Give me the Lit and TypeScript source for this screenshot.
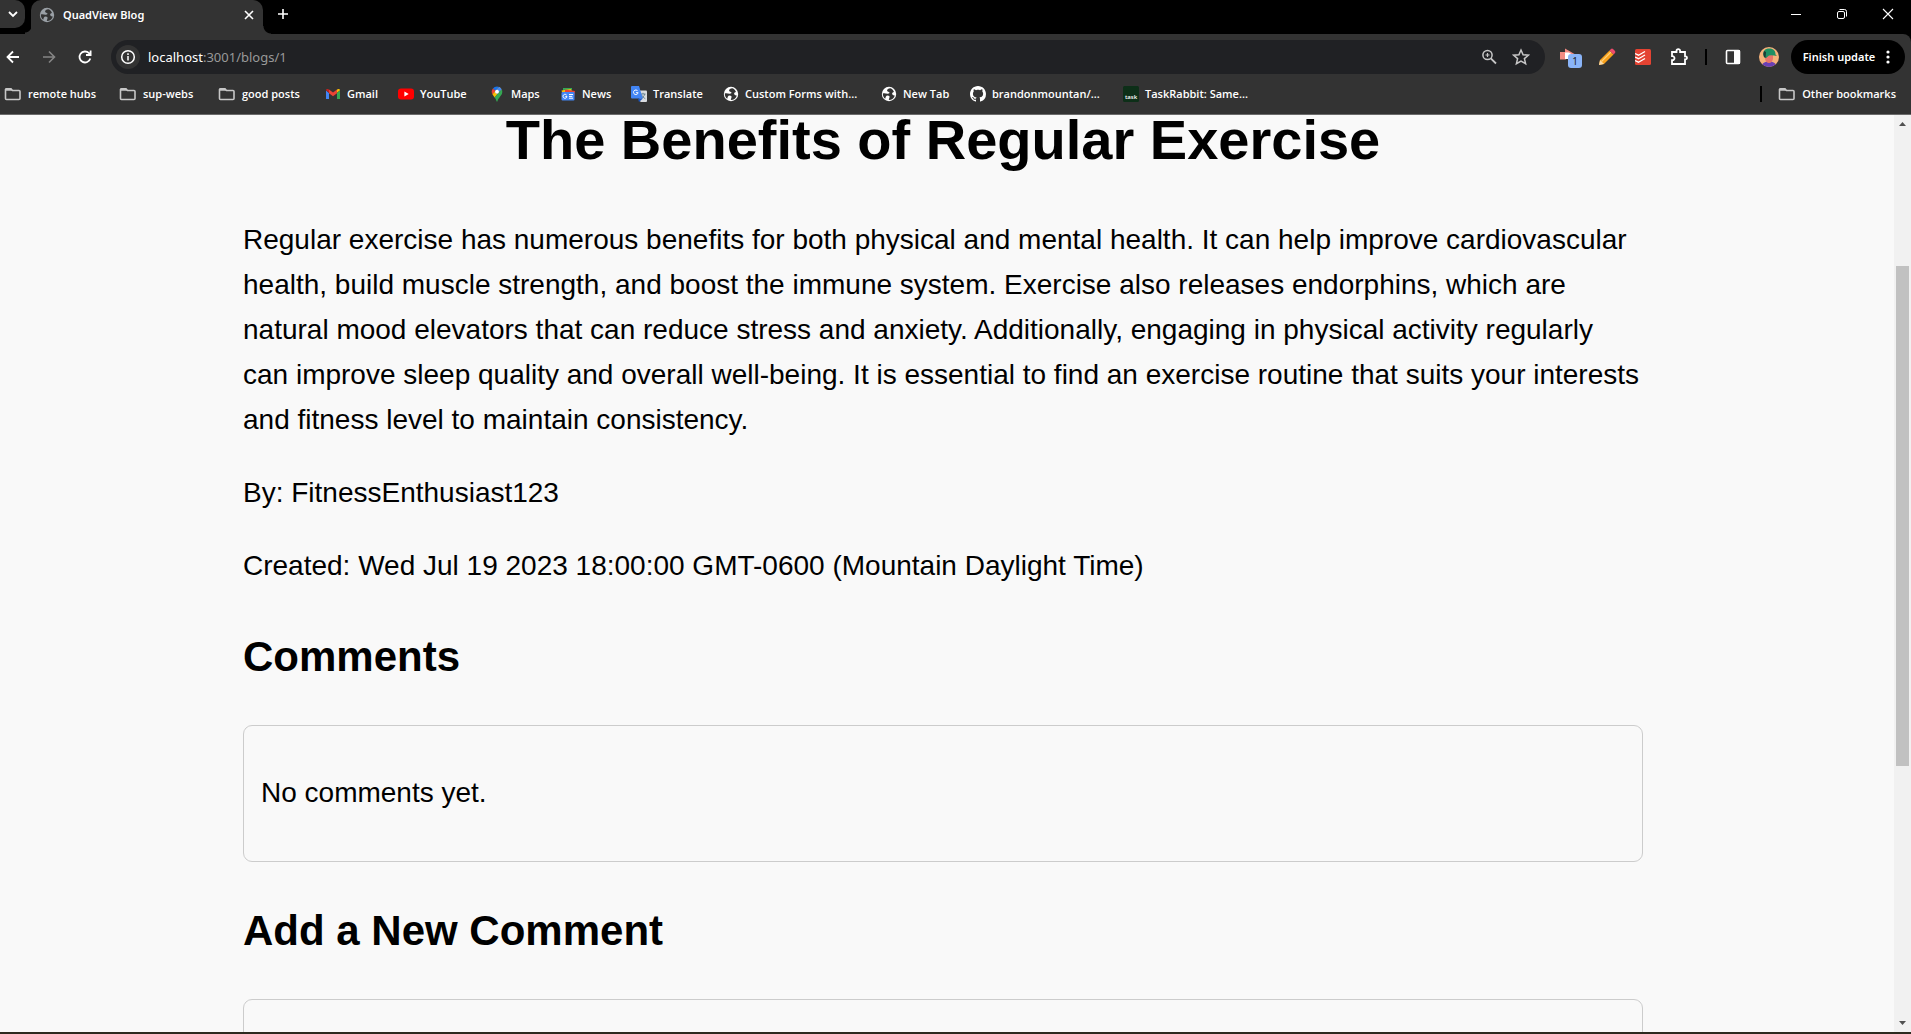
import { LitElement, html, svg, css } from "lit";
import { customElement } from "lit/decorators.js";

const globe = (fg: string, bg: string) => html`<svg class="ico" viewBox="0 0 16 16"><circle cx="8" cy="8" r="7.2" fill=${fg} /><path d="M9.5 2.2C7 2.4 5.6 3.6 6.2 5c.5 1 2 .8 2.300 1.600.3.9-.8 1.200-2 1.100C4.800 7.500 3.800 7 1.800 7.400c0 2.600 1 4.300 2.500 5.300C4.600 11 5 9.600 6.500 9.600c1.700 0 2.300.8 2 2-.2.9-.7 1.400-.6 2.500 3 0 5.400-2 5.900-4.700-1.400.2-2.300-.3-2.600-1.300-.3-1.100.5-1.900 1.800-2.100C12 3.800 11 2.700 9.500 2.200z" fill=${bg} /></svg>`;
const folder = html`<svg class="ico folder" viewBox="0 0 18 16"><path d="M1.500 3.500V12.500a1 1 0 0 0 1 1H15a1 1 0 0 0 1-1V5.500a1 1 0 0 0-1-1H8.500L7 2.800H2.500a1 1 0 0 0-1 .7z" fill="none" stroke="#c7c7c7" stroke-width="1.600" /><path d="M1.500 2.800h5.500l1.500 2h-7z" fill="#c7c7c7" /></svg>`;
const gmail = html`<svg class="ico" viewBox="0 0 16 16"><path d="M1 4.500V13h3V7z" fill="#4285f4" /><path d="M15 4.500V13h-3V7z" fill="#34a853" /><path d="M1 4.300 4 6.800V3.500C3 2.500 1 2.800 1 4.300z" fill="#c5221f" /><path d="M15 4.300 12 6.800V3.500c1-1 3-.7 3 .8z" fill="#fbbc04" /><path d="M4 3.500 8 6.600l4-3.100v3.700L8 10.300 4 7.200z" fill="#ea4335" /></svg>`;
const youtube = html`<svg class="ico" viewBox="0 0 16 16"><rect y="2.500" width="16" height="11" rx="3" fill="#f00" /><path d="M6.400 5.500v5L10.700 8z" fill="#fff" /></svg>`;
const maps = html`<svg class="ico" viewBox="0 0 16 16"><path d="M8 .5A5.300 5.300 0 0 0 3.900 2.500L7 5.200 10.300 1z" fill="#1a73e8" /><path d="M3.900 2.500A5.300 5.300 0 0 0 3.400 8.300L7 5.200z" fill="#ea4335" /><path d="M3.400 8.300c.6 1.100 1.400 2 2.200 3.100L12.500 3.200a6 6 0 0 0-2.200-2.200z" fill="#fbbc04" /><path d="M10.300 1 6 6.100 8 8l4.700-4.600A5.300 5.300 0 0 0 10.300 1z" fill="#4285f4" /><path d="M5.500 11.200c1 1.300 1.700 2.400 2 4 .1.500.9.500 1 0 .7-3.700 4.800-5.300 4.800-9.400 0-.9-.2-1.700-.6-2.400z" fill="#34a853" /><circle cx="8" cy="5.700" r="1.900" fill="#fff" /></svg>`;
const news = html`<svg class="ico" viewBox="0 0 16 16"><path d="M3 2l9 0v6H3z" fill="#34a853" /><path d="M1.500 4.500 11 3l1 5-9 2z" fill="#fbbc04" /><path d="M5 3.500l10 1.500-1 6-9-2z" fill="#ea4335" /><rect x="1.500" y="6" width="13" height="8.500" rx="1" fill="#4285f4" /><path d="M6.700 9.200A2 2 0 1 0 7 10.600H5.300M9 8.500h4M9 10.400h3.300M9 12.200h4" fill="none" stroke="#fff" stroke-width="1" /></svg>`;
const translate = html`<svg class="ico" viewBox="0 0 16 16"><path d="M6 4.500h9a1 1 0 0 1 1 1V15a1 1 0 0 1-1 1H9.500z" fill="#dadce0" /><path d="M9.500 8h5M12 6.800V8m1.800 0c-.5 2-2 3.700-4 4.600M10.500 8.500c.7 1.800 2 3.200 3.800 4.200" fill="none" stroke="#607d8b" stroke-width=".9" /><path d="M1 0h7l3.800 12.500H1a1 1 0 0 1-1-1V1a1 1 0 0 1 1-1z" fill="#4285f4" /><path d="m8 16 3.800-3.500H7z" fill="#1a56c4" /><path d="M6.800 5.100A2.300 2.300 0 1 0 7.100 6.700H4.900" fill="none" stroke="#fff" stroke-width="1" /></svg>`;
const github = html`<svg class="ico" viewBox="0 0 16 16"><path fill="#fff" d="M8 0C3.580 0 0 3.580 0 8c0 3.540 2.290 6.530 5.470 7.590.4.070.55-.17.55-.38 0-.19-.01-.82-.01-1.490-2.010.37-2.530-.49-2.690-.94-.09-.23-.48-.94-.82-1.130-.28-.15-.68-.52-.01-.53.63-.01 1.080.58 1.230.82.72 1.210 1.870.87 2.330.66.070-.52.28-.87.51-1.070-1.780-.2-3.640-.89-3.640-3.950 0-.87.31-1.590.82-2.150-.08-.2-.36-1.020.08-2.120 0 0 .67-.21 2.200.82.64-.18 1.320-.27 2-.27s1.360.09 2 .27c1.530-1.040 2.200-.82 2.200-.82.44 1.100.16 1.920.08 2.120.51.56.82 1.270.82 2.150 0 3.070-1.870 3.750-3.650 3.950.29.25.54.73.54 1.480 0 1.070-.01 1.930-.01 2.200 0 .21.15.46.55.38A8.010 8.010 0 0 0 16 8c0-4.420-3.580-8-8-8z" /></svg>`;
const task = html`<svg class="ico" viewBox="0 0 16 16"><rect width="16" height="16" rx="1.500" fill="#0d2f18" /><text x="8" y="13" text-anchor="middle" font-size="6" font-family="Open Sans, sans-serif" fill="#fff">task</text></svg>`;

const bookmarks = [
  { label: "remote hubs", icon: folder, w: 115 },
  { label: "sup-webs", icon: folder, w: 99 },
  { label: "good posts", icon: folder, w: 107 },
  { label: "Gmail", icon: gmail, w: 73 },
  { label: "YouTube", icon: youtube, w: 91 },
  { label: "Maps", icon: maps, w: 71 },
  { label: "News", icon: news, w: 71 },
  { label: "Translate", icon: translate, w: 92 },
  { label: "Custom Forms with...", icon: globe("#fff", "#333"), w: 158 },
  { label: "New Tab", icon: globe("#fff", "#333"), w: 89 },
  { label: "brandonmountan/...", icon: github, w: 153 },
  { label: "TaskRabbit: Same...", icon: task, w: 140 },
];

const line = (d: string, color = "#fff", w = 1.8) => svg`<path d=${d} fill="none" stroke=${color} stroke-width=${w} />`;

@customElement("browser-chrome")
class BrowserChrome extends LitElement {
  static styles = css`
    :host { display: block; font: 600 11px/16px "Noto Sans", "Open Sans", sans-serif; color: #fff; background: #000; border-bottom: 1px solid #6b6b6b; }
    button { all: unset; box-sizing: border-box; display: flex; align-items: center; justify-content: center; flex: none; }
    svg { display: block; flex: none; }
    a { color: inherit; text-decoration: none; }
    .ico { width: 16px; height: 16px; }
    .folder { width: 18px; }
    .tabs { display: flex; height: 34px; background: #000; }
    .search { width: 25px; height: 28px; background: #333; border-radius: 0 10px 10px 0; }
    .corner { width: 6px; align-self: flex-end; height: 8px; background: radial-gradient(circle at 0 0, #000 6px, #333 7px); }
    .corner.right { width: 8px; background: radial-gradient(circle at 100% 0, #000 7px, #333 8px); }
    .tab { display: flex; align-items: center; width: 232px; box-sizing: border-box; padding: 0 8px 5px; background: #333; border-radius: 10px 10px 0 0; gap: 8px; }
    .tab .title { flex: 1; }
    .plus { width: 24px; height: 28px; }
    .controls { display: flex; margin-left: auto; height: 28px; }
    .controls button { width: 46px; }
    .bar { display: flex; align-items: center; height: 46px; background: #333; border-radius: 0 8px 0 0; }
    .nav { display: flex; width: 111px; }
    .nav button { width: 26px; margin-right: 10px; }
    .omni { flex: 1; display: flex; align-items: center; height: 34px; border-radius: 17px; background: #202124; padding: 0 8px 0 5px; box-sizing: border-box; }
    .info { width: 24px; height: 24px; border-radius: 12px; background: #333; }
    .url { flex: 1; margin-left: 8px; font-size: 13px; font-weight: 400; color: #999; }
    .url b { color: #fff; font-weight: 400; }
    .omni .act { width: 32px; }
    .ext { display: flex; align-items: center; margin-left: 8px; }
    .ext button { width: 36px; height: 34px; }
    .sep { width: 2px; height: 16px; background: #000; }
    .ext .sep { margin: 0 8px; }
    .ext .update { width: 114px; margin: 0 6px 0 4px; border-radius: 17px; background: #000; gap: 8px; }
    .marks { box-sizing: border-box; display: flex; align-items: center; height: 34px; padding: 0 15px 6px 4px; font-family: "Open Sans", "Noto Sans", sans-serif; background: #333; }
    .mark { display: flex; align-items: center; gap: 6px; white-space: nowrap; }
    .other { margin-left: auto; display: flex; align-items: center; gap: 16px; }
  `;
  render() {
    return html`
      <div class="tabs">
        <button class="search" aria-label="Search tabs"><svg width="12" height="12" viewBox="0 0 12 12">${line("M2 4l4 4 4-4")}</svg></button>
        <span class="corner"></span>
        <div class="tab">
          ${globe("#9aa0a6", "#333")}
          <span class="title">QuadView Blog</span>
          <button aria-label="Close tab"><svg width="12" height="12" viewBox="0 0 12 12">${line("M2 2l8 8M10 2l-8 8", "#fff", 1.600)}</svg></button>
        </div>
        <span class="corner right"></span>
        <button class="plus" aria-label="New tab"><svg width="12" height="12" viewBox="0 0 12 12">${line("M6 1v10M1 6h10", "#fff", 1.600)}</svg></button>
        <div class="controls">
          <button aria-label="Minimize"><svg width="12" height="12" viewBox="0 0 12 12">${line("M1 6.500h10", "#fff", 1)}</svg></button>
          <button aria-label="Restore"><svg width="12" height="12" viewBox="0 0 12 12"><rect x="1.500" y="3.500" width="7" height="7" rx="1.500" fill="none" stroke="#fff" />${line("M3.500 1.500H8.500a2 2 0 0 1 2 2V8.500", "#fff", 1)}</svg></button>
          <button aria-label="Close"><svg width="12" height="12" viewBox="0 0 12 12">${line("M1 1l10 10M11 1L1 11", "#fff", 1.100)}</svg></button>
        </div>
      </div>
      <div class="bar">
        <div class="nav">
          <button aria-label="Back"><svg width="16" height="16" viewBox="0 0 16 16">${line("M14 8H3M8 2.500 2.500 8 8 13.500")}</svg></button>
          <button aria-label="Forward"><svg width="16" height="16" viewBox="0 0 16 16">${line("M2 8h11M8 2.500 13.500 8 8 13.500", "#858585", 1.600)}</svg></button>
          <button aria-label="Reload"><svg width="16" height="16" viewBox="0 0 16 16">${line("M13.300 9.500A5.500 5.500 0 1 1 12 4.200L13.800 6M13.600 1.500V6H9")}</svg></button>
        </div>
        <div class="omni">
          <button class="info" aria-label="Site information"><svg width="16" height="16" viewBox="0 0 16 16"><circle cx="8" cy="8" r="6.300" fill="none" stroke="#fff" stroke-width="1.500" />${line("M8 7v4.500M8 4.300v1.600", "#fff", 1.500)}</svg></button>
          <span class="url"><b>localhost</b>:3001/blogs/1</span>
          <button class="act" aria-label="Zoom"><svg width="16" height="16" viewBox="0 0 16 16"><circle cx="6.500" cy="6" r="4.600" fill="none" stroke="#c7c7c7" stroke-width="1.500" />${line("M9.800 9.300 15 14.500", "#c7c7c7", 1.800)}${line("M6.500 4v4M4.500 6h4", "#c7c7c7", 1.200)}</svg></button>
          <button class="act" aria-label="Bookmark this page"><svg width="18" height="18" viewBox="0 0 18 18">${line("M9 2l2.100 4.700 5.200.5-3.900 3.400 1.200 5.100L9 13l-4.600 2.700 1.200-5.100L1.700 7.200l5.200-.5z", "#c7c7c7", 1.500)}</svg></button>
        </div>
        <div class="ext">
          <button aria-label="Recorder extension"><svg width="24" height="26" viewBox="0 0 24 26"><path d="M1 8h5V4.500L15.500 10l-9 5.500H1z" fill="#f28b82" /><path d="M6 8.500h4l3 2-4 4.500H6z" fill="#fff" /><rect x="9" y="10" width="14" height="14" rx="3" fill="#8ab4f8" /><text x="16" y="21" text-anchor="middle" font-size="10" fill="#202124" font-weight="400">1</text></svg></button>
          <button aria-label="Pencil extension"><svg width="18" height="18" viewBox="0 0 18 18"><path d="M1 17l1-5L11.500 2.500 15.500 6.500 6 16z" fill="#f9a01b" /><path d="M3.500 13.500 13 4" stroke="#ffd27a" stroke-width="1.200" /><path d="M1 17l1-5L6 16z" fill="#f7d9a8" /><path d="M11.500 2.500 13 1q1-.8 2 0l2 2q.8 1 0 2L15.500 6.500z" fill="#ef4a6b" /></svg></button>
          <button aria-label="Todoist"><svg width="16" height="16" viewBox="0 0 16 16"><rect width="16" height="16" rx="1.500" fill="#e44332" />${line("M0 4.500l3.500 1.700L10 2.500M0 8 3.500 9.700 10 6M0 11.500l3.500 1.700L10 9.500", "#fff", 1.300)}</svg></button>
          <button aria-label="Extensions"><svg width="18" height="18" viewBox="0 0 18 18">${line("M2 4h4.500V3a1.800 1.800 0 0 1 3.600 0v1H15v4.300h.5a1.500 1.500 0 0 1 0 3H15V16H2v-3.800h.5a2 2 0 0 0 0-4H2z")}</svg></button>
          <span class="sep"></span>
          <button aria-label="Side panel"><svg width="16" height="16" viewBox="0 0 16 16"><rect x="1.500" y="1.500" width="13" height="13" rx="1" fill="none" stroke="#fff" stroke-width="1.600" /><path d="M9 1h6v14H9z" fill="#fff" /></svg></button>
          <button aria-label="Profile"><svg width="20" height="20" viewBox="0 0 20 20"><defs><clipPath id="av"><circle cx="10" cy="10" r="10" /></clipPath></defs><g clip-path="url(#av)"><rect width="20" height="20" fill="#f6b27a" /><path d="M2 20c1-4 4-5.500 8-5.500s7 1.500 8 5.500z" fill="#6a3fb5" /><path d="M6 7h8v5q-1 4-4 4t-4-4z" fill="#e8756a" /><path d="M5 10C3 4 6 1.500 10.500 1.500c4 0 6 2.500 6 6L18 9q-5-1-8-.5L7 11z" fill="#1f8f63" /><path d="M5 10q-1.500-3 0-6l2 1-.5 6z" fill="#1c3b35" /></g></svg></button>
          <button class="update">Finish update<svg width="10" height="14" viewBox="0 0 10 14" fill="#fff"><circle cx="5" cy="2" r="1.600" /><circle cx="5" cy="7" r="1.600" /><circle cx="5" cy="12" r="1.600" /></svg></button>
        </div>
      </div>
      <div class="marks">
        ${bookmarks.map((b) => html`<a class="mark" href="#" style="width:${b.w}px">${b.icon}<span>${b.label}</span></a>`)}
        <div class="other"><span class="sep"></span><a class="mark" href="#">${folder}<span>Other bookmarks</span></a></div>
      </div>
    `;
  }
}

@customElement("app-root")
class AppRoot extends LitElement {
  static styles = css`
    :host { display: flex; flex-direction: column; height: 100vh; overflow: hidden; background: #f9f9f9; color: #000; font: 28px/45px "Liberation Sans", Arial, sans-serif; }
    browser-chrome { flex: none; }
    .view { flex: 1; min-height: 0; display: flex; border-bottom: 2px solid #2d2a1f; }
    .page { flex: 1; overflow: hidden; padding: 0 8px 0 0; }
    .post { max-width: 1400px; margin: 0 auto; }
    h1 { font-size: 56px; line-height: 50px; margin: 0 0 52px; text-align: center; }
    h2 { font-size: 42px; line-height: 67px; margin: 35px 0; }
    p { margin: 28px 0; }
    .box { box-sizing: border-box; border: 1px solid #ccc; border-radius: 9px; padding: 16px 17px; min-height: 137px; }
    .scroll { width: 17px; background: #f1f1f1; display: flex; flex-direction: column; align-items: center; }
    .scroll svg { width: 17px; height: 17px; flex: none; }
    .gap { flex: 134; }
    .thumb { flex: 500; width: 13px; background: #c1c1c1; }
    .rest { flex: 249; }
  `;
  render() {
    return html`
      <browser-chrome></browser-chrome>
      <div class="view">
        <main class="page">
          <article class="post">
            <h1>The Benefits of Regular Exercise</h1>
            <p>Regular exercise has numerous benefits for both physical and mental health. It can help improve cardiovascular health, build muscle strength, and boost the immune system. Exercise also releases endorphins, which are natural mood elevators that can reduce stress and anxiety. Additionally, engaging in physical activity regularly can improve sleep quality and overall well-being. It is essential to find an exercise routine that suits your interests and fitness level to maintain consistency.</p>
            <p>By: FitnessEnthusiast123</p>
            <p>Created: Wed Jul 19 2023 18:00:00 GMT-0600 (Mountain Daylight Time)</p>
            <h2>Comments</h2>
            <div class="box"><p>No comments yet.</p></div>
            <h2>Add a New Comment</h2>
            <div class="box"></div>
          </article>
        </main>
        <div class="scroll">
          <svg viewBox="0 0 17 17"><path d="M5 11h7L8.500 7z" fill="#505050" /></svg>
          <div class="gap"></div><div class="thumb"></div><div class="rest"></div>
          <svg viewBox="0 0 17 17"><path d="M5 6h7L8.500 10z" fill="#505050" /></svg>
        </div>
      </div>
    `;
  }
}
